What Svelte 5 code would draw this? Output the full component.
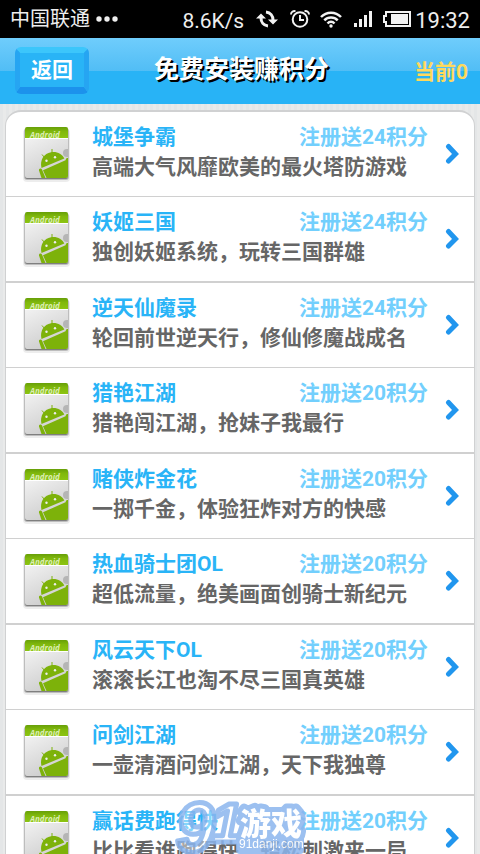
<script>
	const current = 0;

	const apps = [
		{ name: '城堡争霸', points: 24, text: '高端大气风靡欧美的最火塔防游戏' },
		{ name: '妖姬三国', points: 24, text: '独创妖姬系统，玩转三国群雄' },
		{ name: '逆天仙魔录', points: 24, text: '轮回前世逆天行，修仙修魔战成名' },
		{ name: '猎艳江湖', points: 20, text: '猎艳闯江湖，抢妹子我最行' },
		{ name: '赌侠炸金花', points: 20, text: '一掷千金，体验狂炸对方的快感' },
		{ name: '热血骑士团OL', points: 20, text: '超低流量，绝美画面创骑士新纪元' },
		{ name: '风云天下OL', points: 20, text: '滚滚长江也淘不尽三国真英雄' },
		{ name: '问剑江湖', points: 20, text: '一壶清酒问剑江湖，天下我独尊' },
		{ name: '赢话费跑得快', points: 20, text: '比比看谁跑得快，轻松刺激来一局' }
	];
</script>

<svg class="defs" width="0" height="0" aria-hidden="true">
	<defs>
		<linearGradient id="paper" x1="0" y1="0" x2="0.4" y2="1">
			<stop offset="0" stop-color="#fafafa" />
			<stop offset="1" stop-color="#cfcfcf" />
		</linearGradient>
		<linearGradient id="leaf" x1="0" y1="0" x2="0" y2="1">
			<stop offset="0" stop-color="#679f08" />
			<stop offset="0.4" stop-color="#80b80c" />
			<stop offset="1" stop-color="#8cc412" />
		</linearGradient>
		<clipPath id="card"><rect x="3" y="3" width="43" height="51" rx="2" /></clipPath>
		<symbol id="android" viewBox="0 0 50 60">
			<rect x="1" y="5" width="47" height="53" rx="4" fill="#000" opacity="0.07" />
			<rect x="2" y="4" width="45" height="52" rx="3" fill="#000" opacity="0.2" />
			<rect x="3" y="4" width="43" height="51" rx="2" fill="#555" opacity="0.6" />
			<g clip-path="url(#card)">
				<rect x="3" y="3" width="43" height="51" fill="url(#paper)" />
				<rect x="3" y="3" width="43" height="11" fill="url(#leaf)" />
				<text x="8" y="14" class="label">Android</text>
				<rect x="3" y="14" width="43" height="1" fill="#fff" />
				<circle cx="45" cy="29" r="4" fill="#b5b5b5" />
				<g fill="#7db20a">
					<path d="M19.5 44C17.5 36 22 29.5 29 28.3C35 27.3 40 30 42.3 34.5Z" />
					<path d="M21 46.3L43.5 36.2L44 35C44.5 33.5 46 34 46 34V54H24.5Z" />
					<path d="M17 46.5C16.5 44.5 19 43.5 20 45.5L23.5 54H19.5Z" />
				</g>
				<path d="M20 30.5L23 34M30 25L30 29" stroke="#7db20a" stroke-width="1" />
				<circle cx="24.5" cy="36.8" r="1.2" fill="#eee" />
				<circle cx="33" cy="33.3" r="1.2" fill="#eee" />
			</g>
		</symbol>
	</defs>
</svg>

<div class="page">
	<div class="status">
		<span class="carrier">中国联通</span>
		<svg class="dots" width="24" height="8" viewBox="0 0 24 8" fill="#eee">
			<circle cx="4" cy="4" r="2.7" /><circle cx="12" cy="4" r="2.7" /><circle cx="20" cy="4" r="2.7" />
		</svg>
		<span class="speed">8.6K/s</span>
		<svg class="sync" width="22" height="18" viewBox="0 0 22 18">
			<path d="M5 8C5 12 7.5 15.5 12 16M10 2C14.5 2.5 17 6 17 10" fill="none" stroke="#f2f2f2" stroke-width="3" />
			<path d="M0 8.5L5 3.5L10 8.5ZM12 9.5L17 14.5L22 9.5Z" fill="#f2f2f2" />
		</svg>
		<svg class="alarm" width="20" height="18" viewBox="0 0 20 18" fill="none" stroke="#f2f2f2">
			<circle cx="10" cy="9.5" r="7.3" stroke-width="2" />
			<path d="M10 5V10H14" stroke-width="2" />
			<path d="M1 4.5C1 2 3 .8 5.5 1.2M19 4.5C19 2 17 .8 14.5 1.2" stroke-width="2" />
		</svg>
		<svg class="wifi" width="22" height="17" viewBox="0 0 22 17" fill="none" stroke="#f2f2f2" stroke-width="2.5">
			<path d="M1 6C6.5 .2 15.5 .2 21 6M4.3 9.3C8 5.5 14 5.5 17.7 9.3M7.5 12.5C9.5 10.3 12.5 10.3 14.5 12.5" />
			<circle cx="11" cy="15" r="1.7" fill="#f2f2f2" stroke="none" />
		</svg>
		<svg class="signal" width="18" height="16" viewBox="0 0 18 16" fill="#f2f2f2">
			<rect x="0" y="12" width="3" height="4" /><rect x="5" y="8" width="3" height="8" />
			<rect x="10" y="4" width="3" height="12" /><rect x="15" y="0" width="3" height="16" />
		</svg>
		<svg class="battery" width="28" height="16" viewBox="0 0 28 16">
			<path d="M3 1H27V15H3V11H1V5H3Z" fill="none" stroke="#f2f2f2" stroke-width="2" />
			<rect x="8" y="3" width="17" height="10" fill="#f2f2f2" />
		</svg>
		<time class="clock">19:32</time>
	</div>

	<header>
		<button class="back" type="button">返回</button>
		<h1>免费安装赚积分</h1>
		<span class="current">当前{current}</span>
	</header>

	<ul class="list">
		{#each apps as app}
			<li>
				<a href="#app">
					<svg class="icon" width="50" height="60" aria-hidden="true"><use href="#android" /></svg>
					<div class="info">
						<div class="top">
							<span class="name">{app.name}</span>
							<span class="points">注册送{app.points}积分</span>
						</div>
						<div class="text">{app.text}</div>
					</div>
					<svg class="arrow" width="16" height="22" viewBox="0 0 16 22" aria-hidden="true">
						<path d="M4.5 3.5L11.5 11L4.5 18" fill="none" stroke="#2196ee" stroke-width="5" stroke-linecap="round" />
					</svg>
				</a>
			</li>
		{/each}
	</ul>
</div>

<svg class="mark" width="132" height="56" viewBox="0 0 132 56" aria-hidden="true">
	<rect x="62" y="34" width="68" height="22" rx="4" />
	<text x="2" y="54" class="nine">9</text>
	<text x="37" y="44" class="one">1</text>
	<text x="66" y="37" class="game">游戏</text>
	<text x="65" y="50" class="site">91danji.com</text>
</svg>

<style>
	:global(body) {
		background-color: #e6e7e8;
		background-image: repeating-linear-gradient(90deg, #e4e6e7 0, #e4e6e7 3px, #e9eaea 3px, #e9eaea 6px);
		font-family: Roboto, 'Noto Sans CJK SC', sans-serif;
	}
	:global(html) {
		scrollbar-width: none;
	}
	.defs {
		position: absolute;
	}
	.label {
		font: italic bold 8px 'Open Sans', sans-serif;
		fill: #dcedb4;
	}
	.status {
		display: flex;
		align-items: center;
		height: 38px;
		padding: 0 10px;
		background: #000;
		color: #eee;
		line-height: 38px;
	}
	.carrier {
		font-size: 20px;
	}
	.dots {
		margin-left: 5px;
	}
	.speed {
		margin-left: auto;
		padding-top: 3px;
		font-size: 21px;
	}
	.sync {
		margin-left: 12px;
	}
	.alarm {
		margin-left: 12px;
	}
	.wifi {
		margin-left: 10px;
	}
	.signal {
		margin-left: 12px;
	}
	.battery {
		margin-left: 11px;
	}
	.clock {
		margin-left: 4px;
		padding-top: 3px;
		font-size: 22px;
	}
	header {
		display: grid;
		grid-template-columns: 1fr auto 1fr;
		align-items: center;
		height: 66px;
		padding: 0 12px 2px 15px;
		box-sizing: border-box;
		background: linear-gradient(#6fcdfc, #51bdf5 33px, #28b3f6 33px);
	}
	.back {
		justify-self: start;
		width: 74px;
		height: 47px;
		padding: 0;
		border: solid;
		border-width: 6px 5px 7px;
		border-color: #3cc6fb #26a5f2 #1c92ec;
		border-radius: 6px;
		background: #29b4f6;
		color: #fff;
		font-family: inherit;
		font-size: 21px;
		font-weight: bold;
		line-height: 30px;
	}
	h1 {
		margin: 0;
		color: #fff;
		font-size: 25px;
		line-height: 36px;
		text-shadow: 2px 2px 0 #000;
	}
	.current {
		justify-self: end;
		color: #ffd95c;
		font-size: 21px;
		font-weight: bold;
	}
	.list {
		margin: 6px 5px 0;
		padding: 0;
		list-style: none;
		border: 1px solid #d0d1d2;
		border-top-width: 2px;
		border-radius: 16px;
		background: #fff;
	}
	li {
		border-bottom: 1px solid #d0d0d0;
	}
	li:nth-child(even) {
		border-bottom-width: 2px;
	}
	li:last-child {
		border-bottom: 0;
	}
	a {
		display: flex;
		align-items: center;
		height: 84px;
		padding: 0 14px 0 16px;
		text-decoration: none;
		font-size: 21px;
		font-weight: bold;
		line-height: 30px;
	}
	.icon {
		flex: none;
	}
	.info {
		flex: 1;
		min-width: 0;
		margin: 0 16px 4px 20px;
		white-space: nowrap;
	}
	.top {
		display: flex;
		justify-content: space-between;
	}
	.name {
		color: #29b4f7;
	}
	.points {
		color: #72cffd;
	}
	.text {
		color: #666;
	}
	.arrow {
		flex: none;
	}
	.mark {
		position: fixed;
		bottom: 0;
		left: calc(50% - 66px);
		fill: #fff;
		stroke-linejoin: round;
		opacity: 0.85;
	}
	.mark rect {
		fill: #8bb6ee;
	}
	.nine,
	.one {
		fill: rgba(255, 255, 255, 0.5);
		stroke: #8bb6ee;
		stroke-width: 5px;
	}
	.nine {
		font: italic bold 70px 'Liberation Sans', sans-serif;
	}
	.one {
		font: italic bold 56px 'Liberation Sans', sans-serif;
	}
	.game {
		font: 900 31px 'Noto Sans CJK SC', sans-serif;
		stroke: #8bb6ee;
		stroke-width: 10px;
		paint-order: stroke;
	}
	.site {
		font: 12px 'Liberation Sans', sans-serif;
	}
</style>
